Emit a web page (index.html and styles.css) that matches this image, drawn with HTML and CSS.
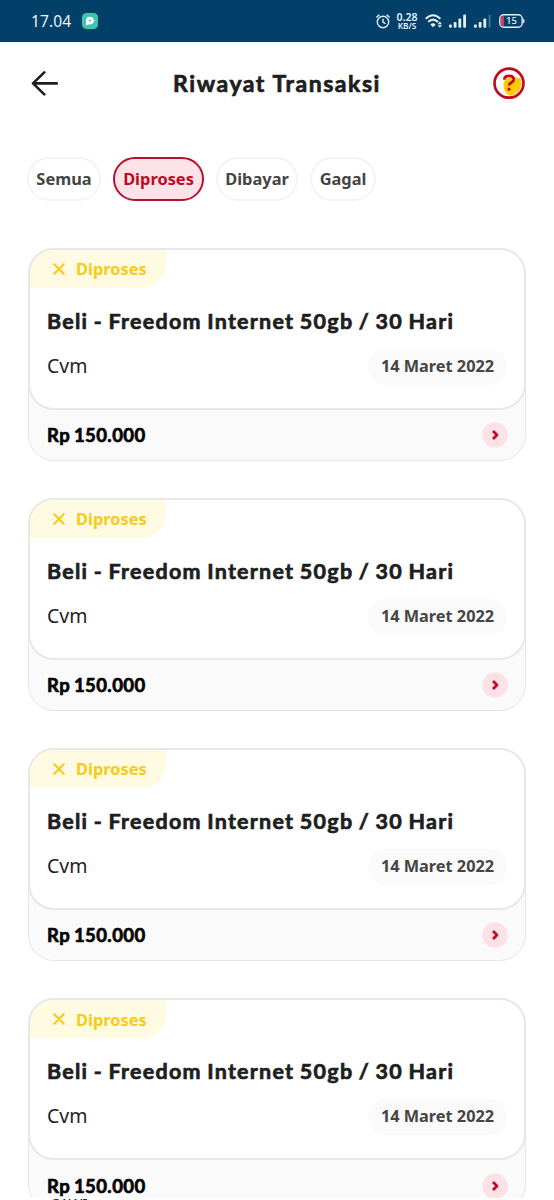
FILE: index.html
```html
<!DOCTYPE html>
<html lang="id">
<head>
<meta charset="utf-8">
<title>Riwayat Transaksi</title>
<link rel="stylesheet" href="styles.css">
</head>
<body>
<div class="statusbar">
  <span class="clock">17.04</span>
  <svg class="app-badge" width="16" height="16" viewBox="0 0 16 16"><rect width="16" height="16" rx="4.5" fill="#3fc4b0"/><circle cx="7.8" cy="7.6" r="3.9" fill="#fff"/><path d="M3.6 12.4l.8-3.6 3 2.3z" fill="#fff"/><circle cx="8" cy="7.6" r="1" fill="#3fc4b0"/><circle cx="12" cy="7.8" r=".8" fill="#fff"/></svg>
  <div class="indicators">
    <svg class="alarm" width="14" height="15" viewBox="0 0 14 15" fill="none" stroke="#e6eff5" stroke-width="1.4" stroke-linecap="round"><circle cx="7" cy="8" r="5.7"/><path d="M7 5.3V8.2L9 9.3M.8 3L3 1.1M13.2 3L11 1.1"/></svg>
    <div class="speed"><span>0.28</span><span class="unit">KB/S</span></div>
    <svg class="wifi" width="18" height="14" viewBox="0 0 18 14" fill="none" stroke="#e6eff5" stroke-width="2"><path d="M.8 4.8Q8 -2.2 15.4 4.8M3.2 7.9Q8 3.3 13 7.9"/><path d="M5.3 10.4Q8 8 10.7 10.4L8 13.2z" fill="#e6eff5" stroke="none"/><path d="M12.6 10.2l2.2-2.6 2.2 2.6zM12.6 11.2l2.2 2.6 2.2-2.6z" fill="#e6eff5" stroke="none"/></svg>
    <svg class="signal" width="18" height="14" viewBox="0 0 18 14" fill="#e6eff5"><rect x="0" y="10.5" width="2.8" height="3.2" rx="1"/><rect x="4.7" y="8" width="2.8" height="5.7" rx="1"/><rect x="9.4" y="4.6" width="2.8" height="9.1" rx="1"/><rect x="14.2" y=".5" width="2.8" height="13.2" rx="1"/></svg>
    <svg class="signal second" width="18" height="14" viewBox="0 0 18 14" fill="#e6eff5"><rect x="0" y="10.5" width="2.8" height="3.2" rx="1"/><rect x="4.7" y="8" width="2.8" height="5.7" rx="1"/><rect x="9.4" y="4.6" width="2.8" height="9.1" rx="1"/><rect x="14.6" y=".5" width="2" height="13.2" rx="1" fill="#3b6f95"/></svg>
    <svg class="battery" width="26" height="14" viewBox="0 0 26 14"><rect x=".8" y=".8" width="22.4" height="12.4" rx="4" fill="none" stroke="#e6eff5" stroke-width="1.4"/><path d="M4.8 2V12A2.8 2.8 0 0 1 2 9.4V4.6A2.8 2.8 0 0 1 4.8 2z" fill="#f03b4b"/><path d="M24.2 4.5q1.4.3 1.4 2.5t-1.4 2.5z" fill="#e6eff5"/><text x="12.4" y="10.3" text-anchor="middle" class="battery-text">15</text></svg>
  </div>
</div>
<header class="topbar">
  <svg class="back" width="28" height="26" viewBox="0 0 28 26" fill="none" stroke="#1e1e1e" stroke-width="2.6" stroke-linecap="round" stroke-linejoin="round"><path d="M25.8 13.4H2M13.3 2.4L2 13.4L13.3 24.4"/></svg>
  <h1 class="title rounded">Riwayat Transaksi</h1>
  <svg class="help" width="32" height="32" viewBox="0 0 32 32" fill="none"><path d="M13 12Q18 9 27.5 11.5A12.8 12.8 0 0 1 17 28.8Q10 25 10.5 18Q10.7 14 13 12z" fill="#ffcb05"/><circle cx="16" cy="16.2" r="14.5" stroke="#c1091f" stroke-width="2.7"/><path d="M11.3 12.7C11.3 10 13.3 8.9 16 8.9C18.8 8.9 20.8 10.2 20.8 12.6C20.8 15.8 16 15.2 16 18.6" stroke="#c1091f" stroke-width="2.6"/><circle cx="16" cy="22.2" r="1.6" fill="#c1091f"/></svg>
</header>
<nav class="filters">
  <button class="chip semua">Semua</button>
  <button class="chip diproses active">Diproses</button>
  <button class="chip dibayar">Dibayar</button>
  <button class="chip gagal">Gagal</button>
</nav>
<main class="list" id="list"></main>
<div class="bottom-strip"><span>CAWI</span></div>
<template id="card">
  <article class="card">
    <section class="card-main">
      <div class="status"><svg width="12" height="12" viewBox="0 0 12 12" fill="none" stroke="#f7cb18" stroke-width="2.1" stroke-linecap="round"><path d="M1.3 1.3L10.7 10.7M10.7 1.3L1.3 10.7"/></svg><span>Diproses</span></div>
      <h2 class="product rounded">Beli - Freedom Internet 50gb / 30 Hari</h2>
      <div class="meta"><span class="kind">Cvm</span><span class="date">14 Maret 2022</span></div>
    </section>
    <footer class="card-foot"><span class="price rounded">Rp 150.000</span><svg class="go" width="26" height="26" viewBox="0 0 26 26"><circle cx="13" cy="13" r="12.7" fill="#fce1e6"/><path d="M11 9L15 13L11 17" fill="none" stroke="#c1091f" stroke-width="2.7" stroke-linejoin="round"/></svg></footer>
  </article>
</template>
<script src="app.js"></script>
</body>
</html>
```
FILE: styles.css
```css
* { box-sizing: border-box; }
body { margin: 0; height: 1200px; overflow: hidden; position: relative; background: #fff; color: #1e1e1e; font-family: "Noto Sans", sans-serif; }
.statusbar { height: 42px; padding: 0 29px 0 31px; display: flex; align-items: center; background: #024069; color: #e9f2f8; }
.clock { width: 51px; font-size: 15.6px; letter-spacing: .1px; }
.indicators { margin-left: auto; display: flex; align-items: center; }
.alarm { margin-right: 6px; }
.speed { width: 22px; margin-right: 7px; display: flex; flex-direction: column; align-items: center; font: 600 10.5px/9px "Noto Sans", sans-serif; }
.speed .unit { font-size: 8.2px; line-height: 8px; }
.wifi { margin-right: 6px; }
.second { margin: 0 7px; }
.battery-text { font: 500 9.5px "Noto Sans", sans-serif; fill: #e6eff5; }
.topbar { height: 82px; padding: 0 29px 0 31px; display: flex; align-items: center; justify-content: space-between; }
.rounded { font-family: Lato, sans-serif; font-weight: 700; -webkit-text-stroke: .7px currentColor; stroke-linejoin: round; white-space: nowrap; }
.title { margin: 0 0 0 2px; font-size: 23px; line-height: 30px; letter-spacing: 1.55px; }
.filters { height: 44px; margin: 33px 0 0 27px; display: flex; }
.chip { height: 44px; padding: 0; border: 2px solid #f4f4f4; border-radius: 22px; background: #fff; color: #454545; font: 700 16.4px/38px "Noto Sans", sans-serif; }
.semua { width: 74px; margin-right: 12px; }
.diproses { width: 91px; margin-right: 12px; }
.dibayar { width: 82px; margin-right: 12px; }
.gagal { width: 66px; }
.chip.active { border-color: #b5102c; background: #fce3e8; color: #c1091f; }
.list { margin: 46.5px 28px 0; display: flex; flex-direction: column; gap: 37.2px; }
.card { height: 213px; flex: none; border: 1px solid #e6e6e6; border-radius: 26px; background: #fafafa; }
.card-main { height: 162px; margin: -1px; border: 2px solid #e8e8e8; border-radius: 26px; background: #fff; overflow: hidden; }
.status { width: 136px; height: 38px; padding-left: 23px; display: flex; align-items: center; gap: 11px; border-bottom-right-radius: 24px; background: #fffae2; color: #f7cb18; font-size: 16.4px; font-weight: 700; }
.product { margin: 18px 0 0 17px; font-size: 21.5px; line-height: 30px; letter-spacing: 1.25px; word-spacing: -1px; }
.meta { height: 36px; margin: 13px 17px 0; display: flex; align-items: center; justify-content: space-between; }
.kind { font-size: 19.5px; line-height: 34px; padding-bottom: 2px; color: #1e1e1e; }
.date { width: 139px; height: 36px; border-radius: 18px; background: #fafafa; color: #454545; text-align: center; font-size: 16.3px; font-weight: 700; line-height: 35px; white-space: nowrap; }
.card-foot { height: 52px; padding: 1px 17px 0 18px; display: flex; align-items: center; justify-content: space-between; }
.price { font-size: 18.5px; letter-spacing: .4px; word-spacing: -1px; color: #050505; }
.bottom-strip { position: absolute; left: 27px; right: 0; bottom: 0; height: 2px; overflow: hidden; background: #fff; }
.bottom-strip span { display: block; margin: -4px 0 0 23px; font: 15px/18px "Noto Sans", sans-serif; }
```
FILE: app.js
```js
const list = document.getElementById('list');
const template = document.getElementById('card');
for (let i = 0; i < 4; i++) list.append(template.content.cloneNode(true));
```
